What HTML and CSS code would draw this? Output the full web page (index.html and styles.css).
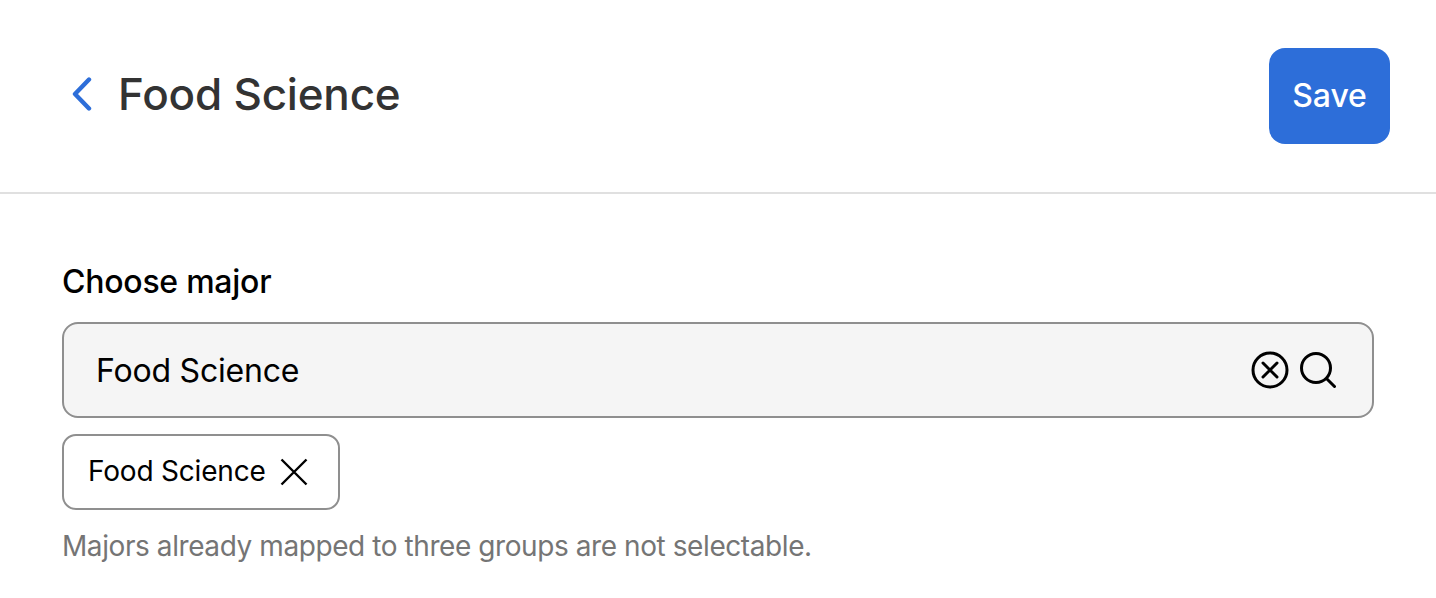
FILE: index.html
```html
<!DOCTYPE html>
<html lang="en">
<head>
  <meta charset="UTF-8"/>
  <title>Choose major</title>
  <link rel="stylesheet" href="styles.css">
</head>
<body>
  <header class="topbar">
    <div class="title-group">
      <svg class="back-icon" width="22" height="36" viewBox="0 0 22 36" fill="none">
        <path d="M19 3.5 L5 18 L19 32.5" stroke="#2d6ed9" stroke-width="4.4" stroke-linecap="round" stroke-linejoin="round"/>
      </svg>
      <h1>Food Science</h1>
    </div>
    <button class="save">Save</button>
  </header>

  <main class="content">
    <label class="field-label">Choose major</label>
    <div class="search">
      <span class="search-value">Food Science</span>
      <div class="search-icons">
        <svg width="38" height="38" viewBox="0 0 38 38" fill="none" stroke="#000" stroke-width="3" stroke-linecap="round">
          <circle cx="19" cy="19" r="17"/>
          <path d="M12 12 L26 26 M26 12 L12 26"/>
        </svg>
        <svg width="36" height="36" viewBox="0 0 36 36" fill="none" stroke="#000" stroke-width="3" stroke-linecap="round">
          <circle cx="16" cy="16" r="14.5"/>
          <path d="M27 27 L34.5 34.5"/>
        </svg>
      </div>
    </div>
    <div class="chip">
      <span>Food Science</span>
      <svg width="28" height="28" viewBox="0 0 28 28" fill="none" stroke="#000" stroke-width="2.4">
        <path d="M1.5 1.5 L26.5 26.5 M26.5 1.5 L1.5 26.5"/>
      </svg>
    </div>
    <p class="hint">Majors already mapped to three groups are not selectable.</p>
  </main>
</body>
</html>
```

FILE: styles.css
```css
body {
  margin:0; background:#fff; color:#000;
  font-family:Inter, "Liberation Sans", sans-serif;
}
.topbar {
  display:flex; justify-content:space-between; align-items:center;
  height:192px; padding:0 46px 0 70px;
  border-bottom:2px solid #e0e0e0;
}
.title-group {
  display:flex; align-items:center; gap:26px;
  margin-bottom:4px;
}
h1 {
  margin:0; font-size:44px; font-weight:500; color:#333;
  letter-spacing:-0.2px;
}
.save {
  width:121px; height:96px; padding:0 0 2px;
  border:none; border-radius:16px;
  background:#2d6ed9; color:#fff;
  font-family:inherit; font-size:32px; font-weight:500;
  letter-spacing:-0.1px;
}
.content {
  width:1312px; margin-left:62px; padding-top:68px;
}
.field-label {
  display:block; margin-bottom:20px;
  font-size:32px; font-weight:500; line-height:40px;
  letter-spacing:-0.25px;
}
.search {
  display:flex; justify-content:space-between; align-items:center;
  box-sizing:border-box; height:96px; padding:0 36px 0 32px;
  border:2px solid #8f8f8f; border-radius:16px;
  background:#f5f5f5;
  font-size:32px;
}
.search-value {
  letter-spacing:-0.2px;
}
.search-icons {
  display:flex; align-items:center; gap:11px;
}
.chip {
  display:inline-flex; align-items:center; gap:14px;
  box-sizing:border-box; height:76px; margin-top:16px; padding:0 30px 0 24px;
  border:2px solid #8f8f8f; border-radius:14px;
  font-size:28px; letter-spacing:-0.2px;
}
.chip span {
  padding-bottom:2px;
}
.hint {
  margin:16px 0 0;
  font-size:28px; line-height:40px; color:#757575;
  letter-spacing:-0.42px;
}
```
